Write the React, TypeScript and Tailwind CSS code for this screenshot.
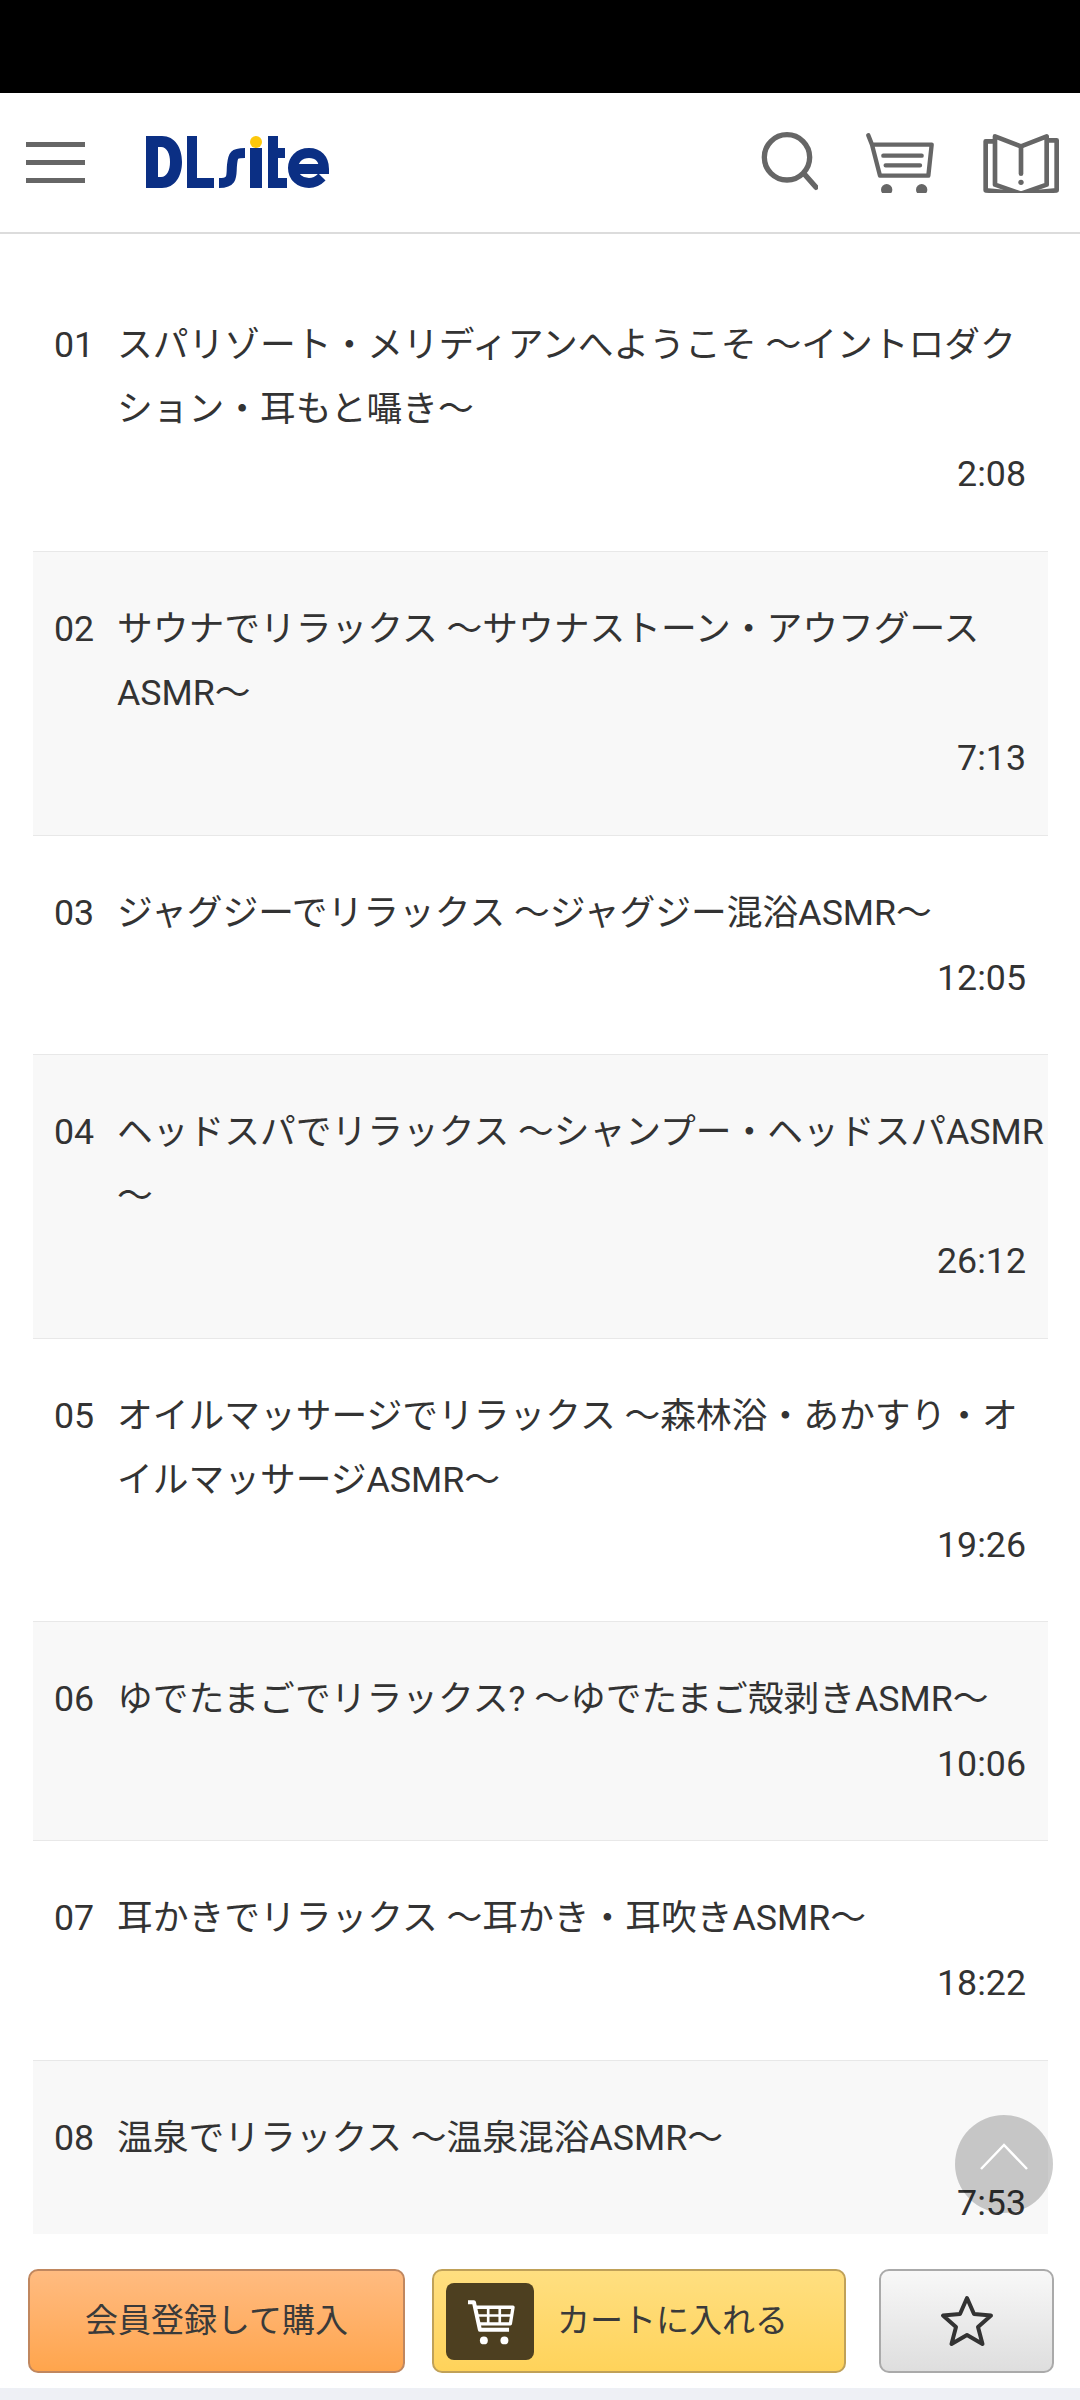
import { useMemo } from 'react';

interface Track {
  no: string;
  title: string;
  time: string;
}

const tracks: Track[] = [
  { no: '01', title: 'スパリゾート・メリディアンへようこそ ～イントロダクション・耳もと囁き～', time: '2:08' },
  { no: '02', title: 'サウナでリラックス ～サウナストーン・アウフグースASMR～', time: '7:13' },
  { no: '03', title: 'ジャグジーでリラックス ～ジャグジー混浴ASMR～', time: '12:05' },
  { no: '04', title: 'ヘッドスパでリラックス ～シャンプー・ヘッドスパASMR～', time: '26:12' },
  { no: '05', title: 'オイルマッサージでリラックス ～森林浴・あかすり・オイルマッサージASMR～', time: '19:26' },
  { no: '06', title: 'ゆでたまごでリラックス? ～ゆでたまご殻剥きASMR～', time: '10:06' },
  { no: '07', title: '耳かきでリラックス ～耳かき・耳吹きASMR～', time: '18:22' },
  { no: '08', title: '温泉でリラックス ～温泉混浴ASMR～', time: '7:53' },
];

function Logo() {
  return (
    <svg width="184" height="54" viewBox="0 0 184 54" className="ml-[61px] mt-[-2px]">
      <path
        fill="#0b2f84"
        fillRule="evenodd"
        d="M0 1H16C29 1 36 13 36 27C36 41 29 53 16 53H0Z M12 12V42H15C21 42 24 35 24 27C24 19 21 12 15 12Z"
      />
      <path fill="#0b2f84" d="M41 1H51V43H68V53H41Z" />
      <path fill="none" stroke="#0b2f84" strokeWidth="10" d="M73 48C88 48 85 40 86 30C87 20 88 18 99 18" />
      <rect x="104" y="13" width="12" height="40" fill="#0b2f84" />
      <circle cx="110" cy="7" r="6" fill="#fdc80c" />
      <path fill="#0b2f84" d="M122 1H132V13H139V23H132V43H141V53H122Z" />
      <path
        fill="none"
        stroke="#0b2f84"
        strokeWidth="10"
        d="M150 34H178C178 24 172 18 163 18C153 18 147 25 147 33C147 42 154 48 163 48C168 48 172 46 176 42"
      />
    </svg>
  );
}

function HeaderIcons() {
  return (
    <div className="flex items-center gap-[46px] pr-5">
      <svg width="62" height="60" viewBox="105 90 186 180" fill="none" stroke="#666" strokeWidth="16" strokeLinecap="round" className="mt-[-2px]">
        <circle cx="198" cy="166" r="68" />
        <path d="M250 216L285 256" />
      </svg>
      <svg width="72" height="60" viewBox="432 90 216 180" fill="none" stroke="#666" strokeWidth="13" strokeLinecap="round" strokeLinejoin="round">
        <path d="M445 97L456 125L480 218H625L635 125H456" />
        <path d="M490 158H605M497 187H600" />
        <circle cx="500" cy="260" r="17" fill="#666" stroke="none" />
        <circle cx="605" cy="260" r="17" fill="#666" stroke="none" />
      </svg>
      <svg width="78" height="60" viewBox="786 90 234 180" fill="none" stroke="#666" strokeWidth="14" strokeLinejoin="round" strokeLinecap="round">
        <path d="M820 115H797V262L903 272L1010 262V112H985" />
        <path d="M825 100L903 130L980 100V245L903 272L825 245Z" />
        <path d="M903 130V212" />
        <circle cx="903" cy="238" r="8" fill="#666" stroke="none" />
      </svg>
    </div>
  );
}

function TrackRow({ track, striped, first }: { track: Track; striped: boolean; first: boolean }) {
  return (
    <li
      className={`border-t pl-[21px] ${first ? 'border-transparent pt-[44px] pb-[45.400px]' : 'border-[#e8e8e8] pt-[45px] pb-[44.400px]'} ${
        striped ? 'bg-[#f8f8f8]' : 'bg-white'
      }`}
    >
      <div className="flex">
        <span className="w-[63px] shrink-0">{track.no}</span>
        <span className="flex-1">{track.title}</span>
      </div>
      <div className="mt-px pr-[22px] text-right">{track.time}</div>
    </li>
  );
}

export default function App() {
  const rows = useMemo(() => tracks, []);

  return (
    <div
      className="relative flex h-[2400px] w-[1080px] flex-col overflow-hidden bg-white text-[35.750px] leading-[64px] text-[#333]"
      style={{ fontFamily: 'Roboto, "Noto Sans CJK JP", sans-serif' }}
    >
      <div className="h-[93px] shrink-0 bg-black" />

      <header className="flex h-[141px] shrink-0 items-center justify-between border-b-2 border-[#dcdcdc]">
        <div className="flex items-center">
          <div className="ml-[26px] flex w-[59px] flex-col gap-[13px]">
            <div className="h-[5px] bg-[#666]" />
            <div className="h-[5px] bg-[#666]" />
            <div className="h-[5px] bg-[#666]" />
          </div>
          <Logo />
        </div>
        <HeaderIcons />
      </header>

      <div className="min-h-0 flex-1 overflow-hidden pl-[33px] pr-[32px] pt-[34px]">
        <ul>
          {rows.map((track, i) => (
            <TrackRow key={track.no} track={track} striped={i % 2 === 1} first={i === 0} />
          ))}
        </ul>
      </div>

      <div className="flex h-[154px] shrink-0 items-start pt-[35px] pl-[28px] text-[33px] text-[#3a3a3a]">
        <button className="flex h-[104px] w-[377px] items-center justify-center rounded-[10px] border-2 border-[#c0875f] bg-gradient-to-b from-[#ffbb80] to-[#ffa54c]">
          会員登録して購入
        </button>
        <button className="ml-[27px] flex h-[104px] w-[414px] items-center rounded-[10px] border-2 border-[#c0a158] bg-gradient-to-b from-[#ffdf80] to-[#ffd35a] pl-[12px]">
          <span className="flex h-[77px] w-[88px] items-center justify-center rounded-[8px] bg-[#4d3f20]">
            <svg width="53" height="47" viewBox="70 65 160 140" fill="none" stroke="#fff" strokeLinejoin="round">
              <path d="M82 77H100L118 160H206" strokeWidth="12" />
              <path d="M105 92H218L210 142H115" strokeWidth="10" />
              <path d="M143 92V142M178 92V142M110 117H214" strokeWidth="8" />
              <circle cx="130" cy="192" r="12" fill="#fff" stroke="none" />
              <circle cx="192" cy="192" r="12" fill="#fff" stroke="none" />
            </svg>
          </span>
          <span className="ml-[23px]">カートに入れる</span>
        </button>
        <button className="ml-[33px] flex h-[104px] w-[175px] items-center justify-center rounded-[10px] border-2 border-[#aaaaaa] bg-gradient-to-b from-[#f8f8f8] to-[#dedede]">
          <svg width="54" height="52" viewBox="0 0 54 52" fill="none" stroke="#333" strokeWidth="4" strokeLinejoin="round">
            <path d="M27 3L34 19L51 20.500L38 32L42.500 49L27 40L11.500 49L16 32L3 20.500L20 19Z" />
          </svg>
        </button>
      </div>

      <div className="h-3 shrink-0 bg-[#eef0f5]" />

      {/* back to top */}
      <div className="absolute left-[955px] top-[2115px] flex h-[98px] w-[98px] items-center justify-center rounded-full bg-black/20">
        <svg width="48" height="28" viewBox="0 0 48 28" fill="none" stroke="#fff" strokeWidth="2.500" className="mb-[14px]">
          <path d="M1 26L24 2L47 26" />
        </svg>
      </div>
    </div>
  );
}
